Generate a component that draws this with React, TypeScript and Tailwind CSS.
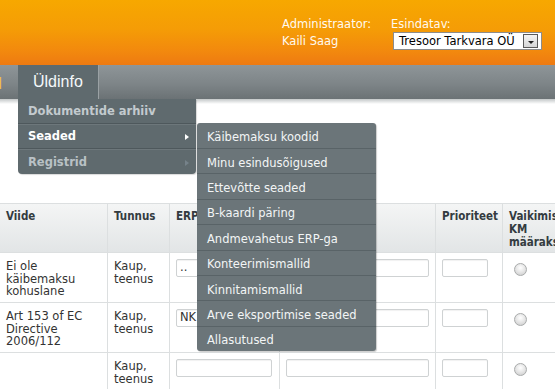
import React from "react";

const subItems = [
  "Käibemaksu koodid",
  "Minu esindusõigused",
  "Ettevõtte seaded",
  "B-kaardi päring",
  "Andmevahetus ERP-ga",
  "Konteerimismallid",
  "Kinnitamismallid",
  "Arve eksportimise seaded",
  "Allasutused",
];

function Input({ w, value }: { w: string; value?: string }) {
  return (
    <div
      className={`${w} h-[18px] border border-[#cfd2d3] rounded-[2px] bg-white shadow-[inset_0_1px_1px_rgba(0,0,0,0.06)] flex items-center pl-[3px] text-[#333] leading-none`}
    >
      {value}
    </div>
  );
}

function Radio() {
  return (
    <div className="mt-[4px] ml-[5px] w-[13px] h-[13px] rounded-full border border-[#a9abab] bg-[radial-gradient(circle_at_50%_35%,#ffffff_0%,#e8e8e8_45%,#c9c9c9_100%)]" />
  );
}

const cell = "border-r border-b border-[#dcdfe0]";
const head =
  "border-r border-b border-[#dcdfe0] pt-[6px] pb-[3px] px-[6px] font-bold text-[#333b40] leading-[13px] bg-[linear-gradient(180deg,#f4f5f5,#e2e5e6)] h-[49px] font-['DejaVu_Sans_Condensed','DejaVu_Sans',sans-serif] text-[11.5px] [font-stretch:condensed]";

export default function App() {
  const rows = [
    { viide: ["Ei ole", "käibemaksu", "kohuslane"], erp: ".." },
    { viide: ["Art 153 of EC", "Directive", "2006/112"], erp: "NK" },
    { viide: [] as string[], erp: "" },
  ];
  return (
    <div className="relative w-[555px] h-[389px] overflow-hidden bg-white font-['DejaVu_Sans',sans-serif] text-[11.5px] text-[#333]">
      {/* header */}
      <div className="h-[65px] flex pl-[282px] pt-[17px] text-[#fffaf0] bg-[linear-gradient(180deg,#f7a800_0%,#f59c06_45%,#f2880e_80%,#ee7a12_100%)]">
        <div className="w-[109px] flex flex-col gap-[3px] leading-[14px]">
          <div>Administraator:</div>
          <div>Kaili Saag</div>
        </div>
        <div className="flex flex-col leading-[14px]">
          <div>Esindatav:</div>
          <div className="ml-[2px] mt-[1px] w-[149px] h-[18px] border border-[#8c8c8c] bg-white flex items-center justify-between pl-[5px] pr-[3px] text-black">
            <span className="text-[11.5px]">Tresoor Tarkvara OÜ</span>
            <span className="w-[15px] h-[14px] border border-[#5a5a5a] bg-[linear-gradient(180deg,#f4f4f4,#d6d6d6)] flex items-end justify-center pb-[3px]">
              <span className="w-0 h-0 border-l-[3px] border-r-[3px] border-t-[3px] border-l-transparent border-r-transparent border-t-[#222]" />
            </span>
          </div>
        </div>
      </div>

      {/* nav */}
      <div className="h-[34px] flex bg-[linear-gradient(180deg,#8e9598_0%,#7e8588_55%,#6b7275_100%)]">
        <div className="w-[18px] overflow-hidden flex items-center">
          <span className="ml-[-7px] mt-[3px] font-['Liberation_Sans',sans-serif] text-[16px] text-[#f0c428]">d</span>
        </div>
        <div className="w-[81px] bg-[#5f6a6e] border-r border-[#9aa1a4] flex items-center pl-[15px] font-['Liberation_Sans',sans-serif] text-[16px] text-[#f4f8fa]">
          Üldinfo
        </div>
        <div className="flex-1" />
      </div>
      <div className="h-[5px] bg-[linear-gradient(180deg,#c3c7c8,#ffffff)]" />

      {/* table */}
      <div className="mt-[99px] border-t border-[#dcdfe0] w-[640px]">
        <div className="grid grid-cols-[108px_62px_110px_156px_67px_137px]">
          {["Viide", "Tunnus", "ERP kood", "Kirjeldus", "Prioriteet"].map((h) => (
            <div key={h} className={head}>
              {h}
            </div>
          ))}
          <div className={head}>
            Vaikimisi
            <br />
            KM
            <br />
            määraks
          </div>

          {rows.map((r, i) => (
            <React.Fragment key={i}>
              <div className={`${cell} pt-[7px] px-[6px] leading-[12.5px] h-[50px]`}>
                {r.viide.map((t) => (
                  <div key={t}>{t}</div>
                ))}
              </div>
              <div className={`${cell} pt-[7px] px-[6px] leading-[12.5px] h-[50px]`}>
                <div>Kaup,</div>
                <div>teenus</div>
              </div>
              <div className={`${cell} pt-[6px] pl-[6px] h-[50px]`}>
                <Input w="w-[96px]" value={r.erp} />
              </div>
              <div className={`${cell} pt-[6px] pl-[6px] h-[50px]`}>
                <Input w="w-[143px]" />
              </div>
              <div className={`${cell} pt-[6px] pl-[6px] h-[50px]`}>
                <Input w="w-[46px]" />
              </div>
              <div className={`${cell} pt-[6px] pl-[6px] h-[50px]`}>
                <Radio />
              </div>
            </React.Fragment>
          ))}
        </div>
      </div>

      {/* main dropdown */}
      <div className="absolute top-[99px] left-[18px] w-[178px] bg-[#5f6a6e] rounded-b-[4px] font-bold text-[11.5px] shadow-[1px_1px_1px_rgba(0,0,0,0.15)]">
        <div className="h-[24px] flex items-center pl-[10px] pt-[2px] text-[#c3cace]">Dokumentide arhiiv</div>
        <div className="h-[25px] flex items-center justify-between pl-[10px] pr-[7px] pt-[2px] text-white border-t border-[#4e585c] shadow-[inset_0_1px_0_#6d777b]">
          <span>Seaded</span>
          <span className="w-0 h-0 border-t-[3px] border-b-[3px] border-l-[4px] border-t-transparent border-b-transparent border-l-white" />
        </div>
        <div className="h-[26px] flex items-center justify-between pl-[10px] pr-[7px] pt-[2px] text-[#b9c1c5] border-t border-[#4e585c] shadow-[inset_0_1px_0_#6d777b]">
          <span>Registrid</span>
          <span className="w-0 h-0 border-t-[3px] border-b-[3px] border-l-[4px] border-t-transparent border-b-transparent border-l-[#76828a]" />
        </div>
      </div>

      {/* sub menu */}
      <div className="absolute top-[123px] left-[197px] w-[179px] bg-[#6b7579] rounded-[3px] text-[#f3f5f6] text-[11.5px] shadow-[1px_1px_1px_rgba(0,0,0,0.2)]">
        {subItems.map((s, i) => (
          <div
            key={s}
            className={`${i === 0 ? "h-[25px]" : "h-[25.4px] border-t border-[#596367]"} flex items-center pl-[10px] pt-[4px]`}
          >
            {s}
          </div>
        ))}
      </div>
    </div>
  );
}
